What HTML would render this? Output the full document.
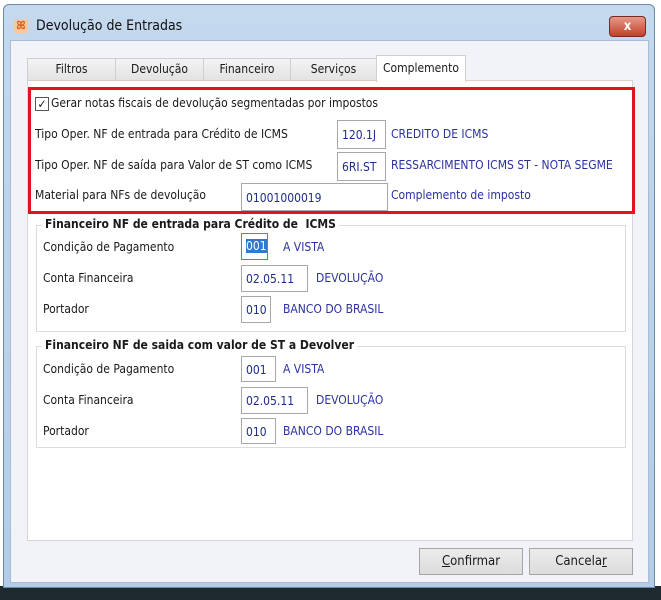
<!DOCTYPE html>
<html><head><meta charset="utf-8"><style>
*{margin:0;padding:0;box-sizing:border-box}
body{width:661px;height:600px;background:#fff;position:relative;overflow:hidden;font-family:"DejaVu Sans Condensed","Liberation Sans",sans-serif;font-size:12px;color:#1a1a1a}
.a{position:absolute}
.frame{left:3px;top:4px;width:652px;height:584px;background:linear-gradient(#c4d8ee,#b3cde8);border:1px solid #6d8aa8;border-radius:6px 6px 0 0}
.inner{left:10px;top:40px;width:639px;height:543px;background:#f1f3f8;border:1px solid #a9bcd2}
.panel{left:27px;top:80px;width:606px;height:461px;background:#fff;border:1px solid #d6d6d6}
.tab{top:58px;height:23px;background:linear-gradient(#f3f3f3,#e3e3e3);border:1px solid #cfcfcf;text-align:center;line-height:21px}
.inp{background:#fff;border:1px solid #a8a8a8;padding-left:4px;color:#1f2d8c}
.blue{color:#2b31a0}
.grp{border:1px solid #dcdcdc}
.gt{background:#fff;font-weight:bold;padding:0 3px}
.btn{top:548px;height:27px;background:linear-gradient(#ececec,#dcdcdc);border:1px solid #a5a5a5;text-align:center;line-height:25px;font-size:13px}
</style></head><body>
<div class="a" style="left:0;top:586px;width:661px;height:14px;background:#1e2a30"></div>
<div class="a frame"></div>
<div class="a" style="left:14px;top:19px;width:14px;height:14px;background:#f5c9a0;color:#e0621b;font-size:11px;line-height:14px;text-align:center;font-weight:bold">ꕤ</div>
<div class="a" style="left:36px;top:18px;font-size:14px;color:#111">Devolução de Entradas</div>
<div class="a" style="left:609px;top:16px;width:37px;height:21px;background:linear-gradient(#e59a8a,#c4402a);border:1px solid #7a2a20;border-radius:4px;color:#fff;font-weight:bold;text-align:center;line-height:19px;font-size:13px">x</div>
<div class="a inner"></div>
<div class="a panel"></div>
<div class="a tab" style="left:27px;width:89px">Filtros</div>
<div class="a tab" style="left:115px;width:89px">Devolução</div>
<div class="a tab" style="left:203px;width:88px">Financeiro</div>
<div class="a tab" style="left:290px;width:87px">Serviços</div>
<div class="a tab" style="left:376px;top:55px;height:27px;width:90px;background:#fff;border-bottom:none;line-height:24px">Complemento</div>
<div class="a" style="left:28px;top:87px;width:607px;height:127px;border:3px solid #e0141c"></div>
<div class="a" style="left:35px;top:97px;width:14px;height:14px;border:1px solid #555;background:#fff;font-size:12px;line-height:12px;text-align:center">✓</div>
<div class="a" style="left:51px;top:96px">Gerar notas fiscais de devolução segmentadas por impostos</div>
<div class="a" style="left:35px;top:127px">Tipo Oper. NF de entrada para Crédito de ICMS</div>
<div class="a inp" style="left:337px;top:120px;width:49px;height:29px;line-height:29px">120.1J</div>
<div class="a blue" style="left:391px;top:127px">CREDITO DE ICMS</div>
<div class="a" style="left:35px;top:158px">Tipo Oper. NF de saída para Valor de ST como ICMS</div>
<div class="a inp" style="left:337px;top:152px;width:49px;height:29px;line-height:29px">6RI.ST</div>
<div class="a blue" style="left:391px;top:158px">RESSARCIMENTO ICMS ST - NOTA SEGME</div>
<div class="a" style="left:35px;top:188px">Material para NFs de devolução</div>
<div class="a inp" style="left:241px;top:183px;width:147px;height:28px;line-height:28px">01001000019</div>
<div class="a blue" style="left:391px;top:188px">Complemento de imposto</div>

<div class="a grp" style="left:36px;top:225px;width:590px;height:107px"></div>
<div class="a gt" style="left:42px;top:217px">Financeiro NF de entrada para Crédito de&nbsp; ICMS</div>
<div class="a" style="left:43px;top:240px">Condição de Pagamento</div>
<div class="a inp" style="left:241px;top:233px;width:27px;height:27px;line-height:25px;border:1px solid #3a8ad8"><span style="background:#3078d0;color:#fff">001</span></div>
<div class="a blue" style="left:283px;top:240px">A VISTA</div>
<div class="a" style="left:43px;top:271px">Conta Financeira</div>
<div class="a inp" style="left:241px;top:265px;width:67px;height:27px;line-height:27px">02.05.11</div>
<div class="a blue" style="left:316px;top:271px">DEVOLUÇÃO</div>
<div class="a" style="left:43px;top:302px">Portador</div>
<div class="a inp" style="left:241px;top:296px;width:30px;height:27px;line-height:27px">010</div>
<div class="a blue" style="left:283px;top:302px">BANCO DO BRASIL</div>

<div class="a grp" style="left:36px;top:346px;width:590px;height:102px"></div>
<div class="a gt" style="left:42px;top:338px">Financeiro NF de saida com valor de ST a Devolver</div>
<div class="a" style="left:43px;top:362px">Condição de Pagamento</div>
<div class="a inp" style="left:241px;top:356px;width:35px;height:26px;line-height:26px">001</div>
<div class="a blue" style="left:283px;top:362px">A VISTA</div>
<div class="a" style="left:43px;top:393px">Conta Financeira</div>
<div class="a inp" style="left:241px;top:387px;width:67px;height:27px;line-height:27px">02.05.11</div>
<div class="a blue" style="left:316px;top:393px">DEVOLUÇÃO</div>
<div class="a" style="left:43px;top:424px">Portador</div>
<div class="a inp" style="left:241px;top:418px;width:35px;height:26px;line-height:26px">010</div>
<div class="a blue" style="left:283px;top:424px">BANCO DO BRASIL</div>

<div class="a btn" style="left:419px;width:104px"><u>C</u>onfirmar</div>
<div class="a btn" style="left:529px;width:104px">Cancela<u>r</u></div>
</body></html>
